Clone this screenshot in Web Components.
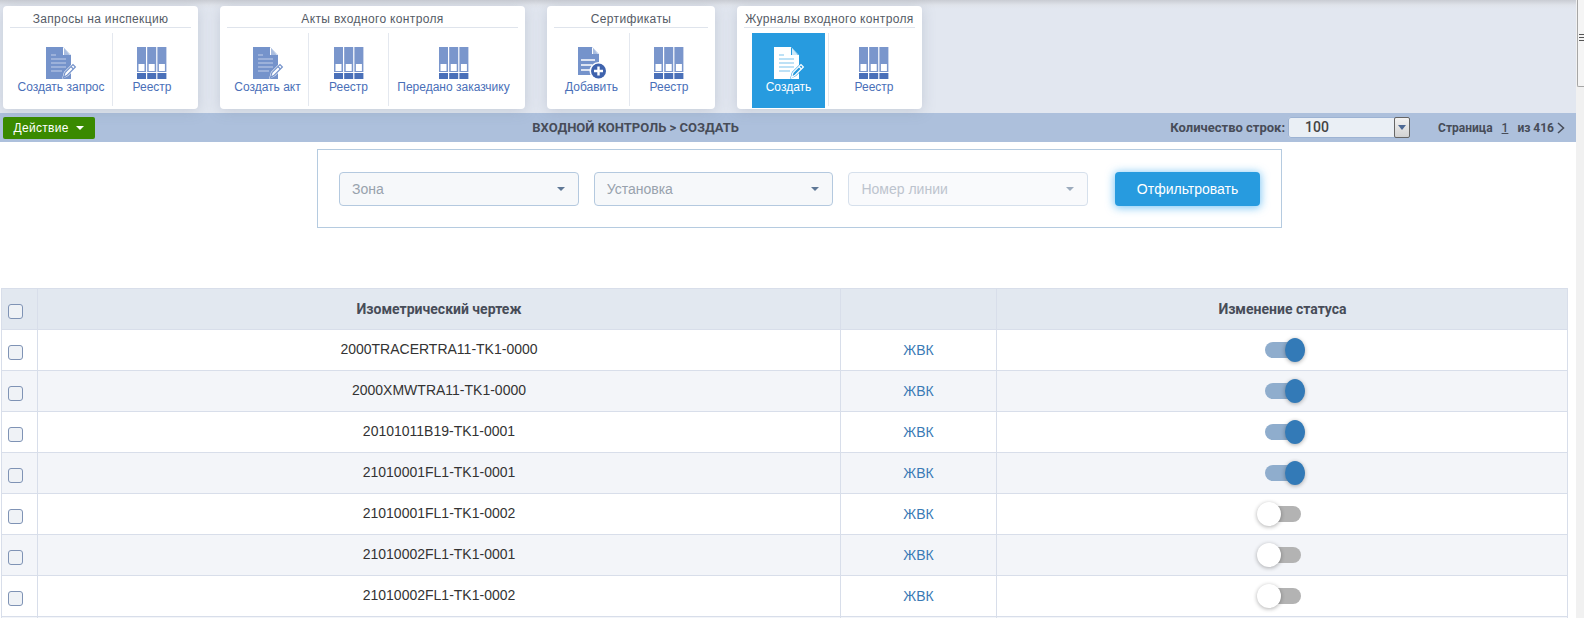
<!DOCTYPE html>
<html lang="ru">
<head>
<meta charset="utf-8">
<title>Входной контроль</title>
<style>
    html, body { margin: 0; height: 100%; overflow: hidden; background: #fff; }
    body { display: flex; font-family: "Liberation Sans", Arial, sans-serif; }
    .page { width: 1576px; flex: none; height: 618px; overflow: hidden; }
</style>
</head>
<body>
<div class="page">
    <tool-ribbon>
        <ribbon-group heading="Запросы на инспекцию" width="195">
            <ribbon-item icon="edit" label="Создать запрос" width="103"></ribbon-item>
            <ribbon-item icon="books" label="Реестр" width="78" last></ribbon-item>
        </ribbon-group>
        <ribbon-group heading="Акты входного контроля" width="305">
            <ribbon-item icon="edit" label="Создать акт" width="82"></ribbon-item>
            <ribbon-item icon="books" label="Реестр" width="80"></ribbon-item>
            <ribbon-item icon="books" label="Передано заказчику" width="129" last></ribbon-item>
        </ribbon-group>
        <ribbon-group heading="Сертификаты" width="168">
            <ribbon-item icon="add" label="Добавить" width="76"></ribbon-item>
            <ribbon-item icon="books" label="Реестр" width="78" last></ribbon-item>
        </ribbon-group>
        <ribbon-group heading="Журналы входного контроля" width="185">
            <ribbon-item icon="edit" label="Создать" width="73" offset="8" active></ribbon-item>
            <ribbon-item icon="books" label="Реестр" width="90" last></ribbon-item>
        </ribbon-group>
    </tool-ribbon>
    <action-bar></action-bar>
    <filter-panel>
        <select-box placeholder="Зона"></select-box>
        <select-box placeholder="Установка"></select-box>
        <select-box placeholder="Номер линии" disabled></select-box>
    </filter-panel>
    <data-table>
        <table-row code="2000TRACERTRA11-TK1-0000" on></table-row>
        <table-row code="2000XMWTRA11-TK1-0000" on alt></table-row>
        <table-row code="20101011B19-TK1-0001" on></table-row>
        <table-row code="21010001FL1-TK1-0001" on alt></table-row>
        <table-row code="21010001FL1-TK1-0002"></table-row>
        <table-row code="21010002FL1-TK1-0001" alt></table-row>
        <table-row code="21010002FL1-TK1-0002"></table-row>
    </data-table>
</div>
<page-scrollbar></page-scrollbar>

<script>
    const ICONS = {
        edit: `
            <svg width="32" height="32" viewBox="0 0 32 32">
                <path d="M1 0H18L26 8V32H1Z" fill="var(--ic)"/>
                <path d="M18 0L26 8H18Z" fill="var(--ic-bg)"/>
                <path d="M19 1L25 8H19Z" fill="var(--ic-fold)"/>
                <path d="M6 8H11M6 12H21M6 16H21M6 20H21M6 24H17" stroke="var(--ic-line)" stroke-width="1.2"/>
                <path d="M17 32L19 25L28 16L32 20L23 29Z" fill="var(--ic-bg)"/>
                <path d="M18.5 30.5L20 25.6L28 17.6L30.4 20L22.4 28Z" fill="none" stroke="var(--ic)" stroke-width="1.2"/>
                <path d="M26 19.6L28.4 22" stroke="var(--ic)" stroke-width="1.2"/>
            </svg>`,
        add: `
            <svg width="30" height="32" viewBox="0 0 30 32">
                <path d="M1 0H15L22 7V28H1Z" fill="var(--ic)"/>
                <path d="M15 0L22 7H15Z" fill="var(--ic-bg)"/>
                <path d="M16 1L21 7H16Z" fill="var(--ic-fold)"/>
                <path d="M4 13H18M4 18H15M4 23H13" stroke="var(--ic-bg)" stroke-width="1.4"/>
                <circle cx="21.5" cy="24" r="9" fill="var(--ic-bg)"/>
                <circle cx="21.5" cy="24" r="7.5" fill="#3f63ad"/>
                <path d="M17 24H26M21.5 19.5V28.5" stroke="#fff" stroke-width="2.4"/>
            </svg>`,
        books: `
            <svg width="30" height="32" viewBox="0 0 30 32">
                <g id="c">
                    <rect x="0" y="0" width="9" height="25" fill="#7a96cc"/>
                    <rect x="1.5" y="17" width="6" height="7" fill="#fff"/>
                    <rect x="0" y="26" width="9" height="6" fill="#4a70b9"/>
                </g>
                <use href="#c" x="10.2"/>
                <use href="#c" x="20.4"/>
            </svg>`
    };

    class ToolRibbon extends HTMLElement {
        constructor() {
            super();
            this.attachShadow({ mode: "open" });
            this.shadowRoot.innerHTML = `
                <style>
                    :host {
                        display: flex;
                        gap: 22px;
                        height: 113px;
                        box-sizing: border-box;
                        padding: 6px 0 0 3px;
                        background: linear-gradient(#c9ccd3 0, #dfe3ea 5px, #e2e7f0 9px);
                    }
                </style>
                <slot></slot>
            `;
        }
    }

    class RibbonGroup extends HTMLElement {
        constructor() {
            super();
            this.attachShadow({ mode: "open" });
            this.shadowRoot.innerHTML = `
                <style>
                    :host {
                        display: block;
                        box-sizing: border-box;
                        height: 103px;
                        padding: 0 7px;
                        background: #fff;
                        border-radius: 4px;
                        box-shadow: 0 2px 14px rgba(120, 130, 150, .28);
                    }
                    h3 {
                        margin: 0;
                        height: 21px;
                        line-height: 26px;
                        font-size: 12px;
                        font-weight: normal;
                        letter-spacing: .35px;
                        white-space: nowrap;
                        text-align: center;
                        color: #555b66;
                        border-bottom: 1px solid #dfe4ec;
                    }
                    .items { display: flex; margin-top: 5px; height: 73px; }
                </style>
                <h3></h3>
                <div class="items"><slot></slot></div>
            `;
        }

        connectedCallback() {
            this.shadowRoot.querySelector("h3").textContent = this.getAttribute("heading");
            this.style.width = this.getAttribute("width") + "px";
        }
    }

    class RibbonItem extends HTMLElement {
        constructor() {
            super();
            this.attachShadow({ mode: "open" });
            this.shadowRoot.innerHTML = `
                <style>
                    :host {
                        display: block;
                        flex: none;
                        box-sizing: border-box;
                        --ic: #7593cb;
                        --ic-bg: #fff;
                        --ic-fold: #a9bde0;
                        --ic-line: #c3d0e9;
                        border-right: 1px solid #e4e8ef;
                    }
                    :host([last]) { border-right: 0; }
                    a {
                        display: flex;
                        flex-direction: column;
                        align-items: center;
                        height: 75px;
                        box-sizing: border-box;
                        padding-top: 14px;
                        font-size: 12px;
                        color: #4a6fb8;
                        white-space: nowrap;
                    }
                    svg { display: block; }
                    span { line-height: 14px; margin-top: 1px; }
                    :host([active]) a {
                        background: #279bdf;
                        color: #fff;
                        --ic: #fff;
                        --ic-bg: #279bdf;
                        --ic-fold: #cfe9f9;
                        --ic-line: #7cc3ee;
                    }
                </style>
                <a><div class="icon"></div><span></span></a>
            `;
        }

        connectedCallback() {
            this.shadowRoot.querySelector(".icon").innerHTML = ICONS[this.getAttribute("icon")];
            this.shadowRoot.querySelector("span").textContent = this.getAttribute("label");
            this.style.width = this.getAttribute("width") + "px";
            if (this.hasAttribute("offset")) {
                this.style.marginLeft = this.getAttribute("offset") + "px";
                this.style.paddingRight = "3px";
                this.style.width = (+this.getAttribute("width") + 4) + "px";
            }
        }
    }

    class ActionBar extends HTMLElement {
        constructor() {
            super();
            this.attachShadow({ mode: "open" });
            this.shadowRoot.innerHTML = `
                <style>
                    :host {
                        display: flex;
                        align-items: center;
                        height: 29px;
                        box-sizing: border-box;
                        padding: 0 11px 0 3px;
                        background: #adc0dc;
                        color: #474c58;
                        font-family: Roboto, sans-serif;
                        font-size: 13px;
                        font-weight: 700;
                        white-space: nowrap;
                    }
                    button {
                        flex: none;
                        width: 92px;
                        height: 22px;
                        padding: 0;
                        border: 0;
                        border-radius: 2px;
                        background: #3a8a00;
                        color: #fff;
                        font: 12px "Liberation Sans", sans-serif;
                        letter-spacing: .3px;
                    }
                    button i {
                        display: inline-block;
                        margin-left: 4px;
                        vertical-align: 2px;
                        border: 4px solid transparent;
                        border-top-color: #fff;
                        border-bottom: 0;
                    }
                    .title { flex: 1; text-align: center; padding-left: 9px; }
                    .count { margin-left: 3px; }
                    .combo {
                        display: flex;
                        width: 122px;
                        height: 21px;
                        box-sizing: border-box;
                        margin: 0 28px 0 3px;
                        background: #eaeff5;
                        border-radius: 3px;
                        box-shadow: inset 0 0 0 1px #9db3d3;
                        font-size: 14px;
                        font-weight: 500;
                        line-height: 21px;
                        color: #444;
                    }
                    .combo b { flex: 1; padding-left: 17px; font-weight: 500; }
                    .combo i {
                        display: flex;
                        align-items: center;
                        justify-content: center;
                        width: 16px;
                        box-sizing: border-box;
                        border: 1px solid #666;
                        border-radius: 2px;
                        background: linear-gradient(#f2f2f2, #d2d2d2);
                    }
                    .combo i::after {
                        content: "";
                        border: 4px solid transparent;
                        border-top: 5px solid #4d6893;
                        border-bottom: 0;
                    }
                    .pager { font-size: 12px; display: flex; align-items: center; }
                    u { margin: 0 9px; font-weight: 500; }
                    svg { margin-left: 3px; }
                </style>
                <button>Действие <i></i></button>
                <div class="title">ВХОДНОЙ КОНТРОЛЬ &gt; СОЗДАТЬ</div>
                <span class="count">Количество строк:</span>
                <div class="combo"><b>100</b><i></i></div>
                <div class="pager">
                    Страница <u>1</u> из 416
                    <svg width="8" height="12" viewBox="0 0 8 12"><path d="M1 1L6.5 6L1 11" fill="none" stroke="#474c58" stroke-width="1.5"/></svg>
                </div>
            `;
        }
    }

    class FilterPanel extends HTMLElement {
        constructor() {
            super();
            this.attachShadow({ mode: "open" });
            this.shadowRoot.innerHTML = `
                <style>
                    :host {
                        display: flex;
                        align-items: center;
                        gap: 15px;
                        width: 965px;
                        height: 79px;
                        box-sizing: border-box;
                        margin: 7px 0 0 317px;
                        padding: 0 21px;
                        border: 1px solid #b5cbe0;
                    }
                    button {
                        width: 145px;
                        height: 34px;
                        margin-left: 12px;
                        border: 0;
                        border-radius: 4px;
                        background: #279bdf;
                        color: #fff;
                        font: 14px "Liberation Sans", sans-serif;
                        box-shadow: 0 1px 9px 1px rgba(60, 170, 240, .65);
                    }
                </style>
                <slot></slot>
                <button>Отфильтровать</button>
            `;
        }
    }

    class SelectBox extends HTMLElement {
        constructor() {
            super();
            this.attachShadow({ mode: "open" });
            this.shadowRoot.innerHTML = `
                <style>
                    :host {
                        display: flex;
                        align-items: center;
                        justify-content: space-between;
                        width: 240px;
                        height: 34px;
                        box-sizing: border-box;
                        padding: 0 13px 0 12px;
                        background: #f6f8fa;
                        border: 1px solid #b4c9df;
                        border-radius: 4px;
                        color: #98a2ad;
                        font-size: 14px;
                    }
                    :host([disabled]) {
                        background: #f9fafc;
                        border-color: #d6e0ec;
                        color: #bdc4ce;
                    }
                    i {
                        border: 4px solid transparent;
                        border-top: 4px solid #5f7896;
                        border-bottom: 0;
                    }
                    :host([disabled]) i { border-top-color: #9cabbd; }
                </style>
                <span></span><i></i>
            `;
        }

        connectedCallback() {
            this.shadowRoot.querySelector("span").textContent = this.getAttribute("placeholder");
        }
    }

    const ROW_STYLE = `
        .row {
            display: grid;
            grid-template-columns: 36px 803px 156px 571px;
            height: 41px;
            box-sizing: border-box;
            margin-left: 1px;
            border-bottom: 1px solid #d8deea;
            border-right: 1px solid #d8deea;
            border-left: 1px solid #d8deea;
            margin-right: 8px;
        }
        .row > div {
            display: flex;
            align-items: center;
            justify-content: center;
            border-right: 1px solid #d8deea;
        }
        .row > div:last-child { border-right: 0; }
        .box {
            width: 15px;
            height: 15px;
            box-sizing: border-box;
            margin: 4px 8px 0 0;
            border: 1px solid #7f93b5;
            border-radius: 3px;
            background: #eff2f6;
        }
    `;

    class DataTable extends HTMLElement {
        constructor() {
            super();
            this.attachShadow({ mode: "open" });
            this.shadowRoot.innerHTML = `
                <style>
                    :host { display: block; margin-top: 60px; }
                    ${ROW_STYLE}
                    .head {
                        background: #e2e8f0;
                        border-top: 1px solid #d8deea;
                        height: 42px;
                        font: 700 14px Roboto, sans-serif;
                        color: #474c58;
                    }
                    .tail { background: #f3f5f9; border-bottom: 0; }
                </style>
                <div class="row head">
                    <div><span class="box"></span></div>
                    <div>Изометрический чертеж</div>
                    <div></div>
                    <div>Изменение статуса</div>
                </div>
                <slot></slot>
                <div class="row tail"><div></div><div></div><div></div><div></div></div>
            `;
        }
    }

    class TableRow extends HTMLElement {
        constructor() {
            super();
            this.attachShadow({ mode: "open" });
            this.shadowRoot.innerHTML = `
                <style>
                    :host { display: block; font-size: 14px; color: #333; }
                    ${ROW_STYLE}
                    :host([alt]) .row { background: #f3f5f9; }
                    .code { padding-bottom: 3px; }
                    .link { color: #3a7ab5; padding-bottom: 1px; }
                </style>
                <div class="row">
                    <div><span class="box"></span></div>
                    <div class="code"></div>
                    <div class="link">ЖВК</div>
                    <div><status-toggle></status-toggle></div>
                </div>
            `;
        }

        connectedCallback() {
            this.shadowRoot.querySelector(".code").textContent = this.getAttribute("code");
            if (this.hasAttribute("on")) this.shadowRoot.querySelector("status-toggle").setAttribute("on", "");
        }
    }

    class StatusToggle extends HTMLElement {
        constructor() {
            super();
            this.attachShadow({ mode: "open" });
            this.shadowRoot.innerHTML = `
                <style>
                    :host {
                        display: flex;
                        align-items: center;
                        width: 40px;
                        height: 16px;
                        background: #b3b3b3;
                        border-radius: 8px;
                        margin-right: 4px;
                    }
                    i {
                        width: 24px;
                        height: 24px;
                        margin-left: -4px;
                        border-radius: 50%;
                        background: #fff;
                        box-shadow: 0 1px 4px rgba(0, 0, 0, .32);
                    }
                    :host([on]) { background: #8fadcd; margin-right: -4px; }
                    :host([on]) i { margin-left: 20px; background: #337ab7; }
                </style>
                <i></i>
            `;
        }
    }

    class PageScrollbar extends HTMLElement {
        constructor() {
            super();
            this.attachShadow({ mode: "open" });
            this.shadowRoot.innerHTML = `
                <style>
                    :host {
                        display: block;
                        flex: 1;
                        height: 618px;
                        background: #f1f1f1;
                    }
                    .thumb {
                        display: flex;
                        align-items: center;
                        height: 87px;
                        box-sizing: border-box;
                        margin-left: 1px;
                        padding-left: 1px;
                        border: 1px solid #a6a6a6;
                        border-top: 0;
                        border-right: 0;
                        border-radius: 0 0 0 2px;
                        background: #f5f5f5;
                    }
                    .thumb i {
                        width: 6px;
                        height: 7px;
                        margin-bottom: 12px;
                        background: repeating-linear-gradient(#555 0 1px, transparent 1px 3px);
                    }
                </style>
                <div class="thumb"><i></i></div>
            `;
        }
    }

    customElements.define("tool-ribbon", ToolRibbon);
    customElements.define("ribbon-group", RibbonGroup);
    customElements.define("ribbon-item", RibbonItem);
    customElements.define("action-bar", ActionBar);
    customElements.define("filter-panel", FilterPanel);
    customElements.define("select-box", SelectBox);
    customElements.define("data-table", DataTable);
    customElements.define("table-row", TableRow);
    customElements.define("status-toggle", StatusToggle);
    customElements.define("page-scrollbar", PageScrollbar);
</script>
</body>
</html>
